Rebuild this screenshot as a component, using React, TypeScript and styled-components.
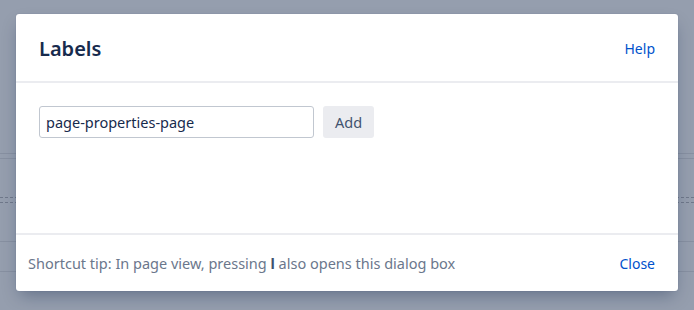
import React from 'react'
import styled, { createGlobalStyle } from 'styled-components'

const GlobalStyle = createGlobalStyle`
    html, body {
        margin: 0;
        padding: 0;
        background: #959eae;
        font-family: "Segoe UI", "Noto Sans", "Liberation Sans", sans-serif;
    }
`
const Page = styled.div`
    position: relative;
    width: 694px;
    height: 310px;
    overflow: hidden;
    background: #959eae;
`
const Backdrop = styled.div`
    display: flex;
    flex-direction: column;
    padding-top: 153px;
`
const BgLine = styled.div<{ $dashed?: boolean; $gap: number }>`
    height: 0;
    margin-bottom: ${props => props.$gap}px;
    border-top: 1px ${props => (props.$dashed ? 'dashed #6f788a' : 'solid #8790a1')};
`
const Overlay = styled.div`
    position: absolute;
    inset: 0;
    padding: 14px 16px 0 16px;
`
const Dialog = styled.div`
    width: 662px;
    height: 277px;
    background: #fff;
    border-radius: 3px;
    display: flex;
    flex-direction: column;
    box-shadow: 0 8px 16px -4px rgba(9, 30, 66, 0.35), 0 0 1px rgba(9, 30, 66, 0.3);
    color: #172b4d;
`
const Header = styled.div`
    display: flex;
    align-items: center;
    justify-content: space-between;
    height: 65px;
    padding: 2px 23px 0 23px;
    border-bottom: 2px solid #ebecf0;
`
const Title = styled.h1`
    margin: 0;
    font-size: 20px;
    font-weight: 600;
    color: #172b4d;
`
const LinkText = styled.a`
    font-size: 14px;
    color: #0052cc;
    text-decoration: none;
    cursor: pointer;
`
const Body = styled.div`
    flex: 1;
    padding: 23px 23px;
`
const Row = styled.div`
    display: flex;
    gap: 9px;
`
const Input = styled.input`
    box-sizing: border-box;
    width: 275px;
    height: 32px;
    padding: 0 6px;
    border: 1px solid #c1c7d0;
    border-radius: 3px;
    font-family: inherit;
    font-size: 14.5px;
    color: #172b4d;
    outline: none;
`
const Button = styled.button`
    height: 32px;
    padding: 0 12px;
    border: none;
    border-radius: 3px;
    background: #ebecf0;
    color: #42526e;
    font-family: inherit;
    font-size: 14.5px;
`
const Footer = styled.div`
    display: flex;
    align-items: center;
    justify-content: space-between;
    height: 56px;
    padding: 0 23px 0 12px;
    border-top: 2px solid #ebecf0;
`
const Tip = styled.div`
    font-size: 14.5px;
    color: #6b778c;
    b {
        color: #42526e;
    }
`

const App = () => {
    return (
        <Page>
            <GlobalStyle />
            <Backdrop>
                <BgLine $gap={4} />
                <BgLine $gap={38} />
                <BgLine $dashed $gap={4} />
                <BgLine $dashed $gap={38} />
                <BgLine $gap={29} />
                <BgLine $gap={0} />
            </Backdrop>
            <Overlay>
                <Dialog>
                    <Header>
                        <Title>Labels</Title>
                        <LinkText>Help</LinkText>
                    </Header>
                    <Body>
                        <Row>
                            <Input defaultValue="page-properties-page" />
                            <Button>Add</Button>
                        </Row>
                    </Body>
                    <Footer>
                        <Tip>
                            Shortcut tip: In page view, pressing <b>l</b> also opens this dialog box
                        </Tip>
                        <LinkText>Close</LinkText>
                    </Footer>
                </Dialog>
            </Overlay>
        </Page>
    )
}

export default App
